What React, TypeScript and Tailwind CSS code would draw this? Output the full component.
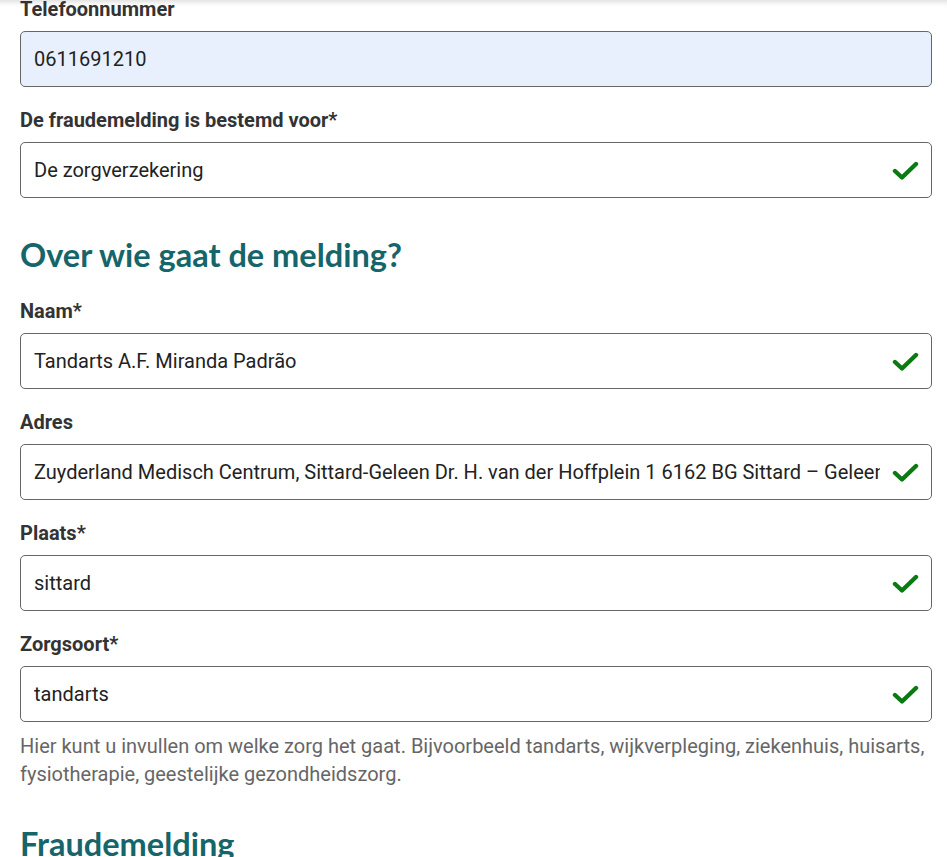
import React from "react";

const Check = () => (
  <svg width="27" height="21" viewBox="0 0 27 21" className="shrink-0">
    <polyline points="3,11 10,17.5 24,4" fill="none" stroke="#0b7a12" strokeWidth="4.4" strokeLinecap="round" strokeLinejoin="round" />
  </svg>
);

function Field({ label, value, autofill, check }: { label: string; value: string; autofill?: boolean; check?: boolean }) {
  return (
    <div className="mb-[21px]">
      <div className="text-[20px] leading-[24px] font-bold text-[#333] mb-[10px]">{label}</div>
      <div
        className={
          "h-[56px] rounded-[5px] border border-[#666] flex items-center pl-[13px] pr-[12px] gap-3 " +
          (autofill ? "bg-[#e8f0fe]" : "bg-white")
        }
      >
        <div className="flex-1 min-w-0 overflow-hidden whitespace-nowrap text-[20px] text-[#222]">{value}</div>
        {check && <Check />}
      </div>
    </div>
  );
}

export default function App() {
  return (
    <div className="min-h-[857px] bg-white shadow-[inset_0_7px_6px_-6px_rgba(0,0,0,0.18)] overflow-hidden" style={{ fontFamily: "Roboto, 'Liberation Sans', sans-serif" }}>
      <div className="ml-[20px] w-[912px] mt-[-3px]">
        <Field label="Telefoonnummer" value="0611691210" autofill />
        <Field label="De fraudemelding is bestemd voor*" value="De zorgverzekering" check />
        <h2 className="mt-[37px] mb-[24px] text-[32.5px] leading-[40px] font-bold text-[#15656b]" style={{ fontFamily: "Lato, 'Noto Sans', sans-serif" }}>
          Over wie gaat de melding?
        </h2>
        <Field label="Naam*" value="Tandarts A.F. Miranda Padrão" check />
        <Field label="Adres" value="Zuyderland Medisch Centrum, Sittard-Geleen Dr. H. van der Hoffplein 1 6162 BG Sittard – Geleen" check />
        <Field label="Plaats*" value="sittard" check />
        <div>
          <div className="text-[20px] leading-[24px] font-bold text-[#333] mb-[10px]">Zorgsoort*</div>
          <div className="h-[56px] rounded-[5px] border border-[#666] flex items-center pl-[13px] pr-[12px] gap-3 bg-white">
            <div className="flex-1 min-w-0 overflow-hidden whitespace-nowrap text-[20px] text-[#222]">tandarts</div>
            <Check />
          </div>
          <p className="mt-[10px] text-[20px] leading-[28px] text-[#666]">
            Hier kunt u invullen om welke zorg het gaat. Bijvoorbeeld tandarts, wijkverpleging, ziekenhuis, huisarts, fysiotherapie, geestelijke gezondheidszorg.
          </p>
        </div>
        <h2 className="mt-[36px] text-[32.5px] leading-[40px] font-bold text-[#15656b]" style={{ fontFamily: "Lato, 'Noto Sans', sans-serif" }}>
          Fraudemelding
        </h2>
      </div>
    </div>
  );
}
